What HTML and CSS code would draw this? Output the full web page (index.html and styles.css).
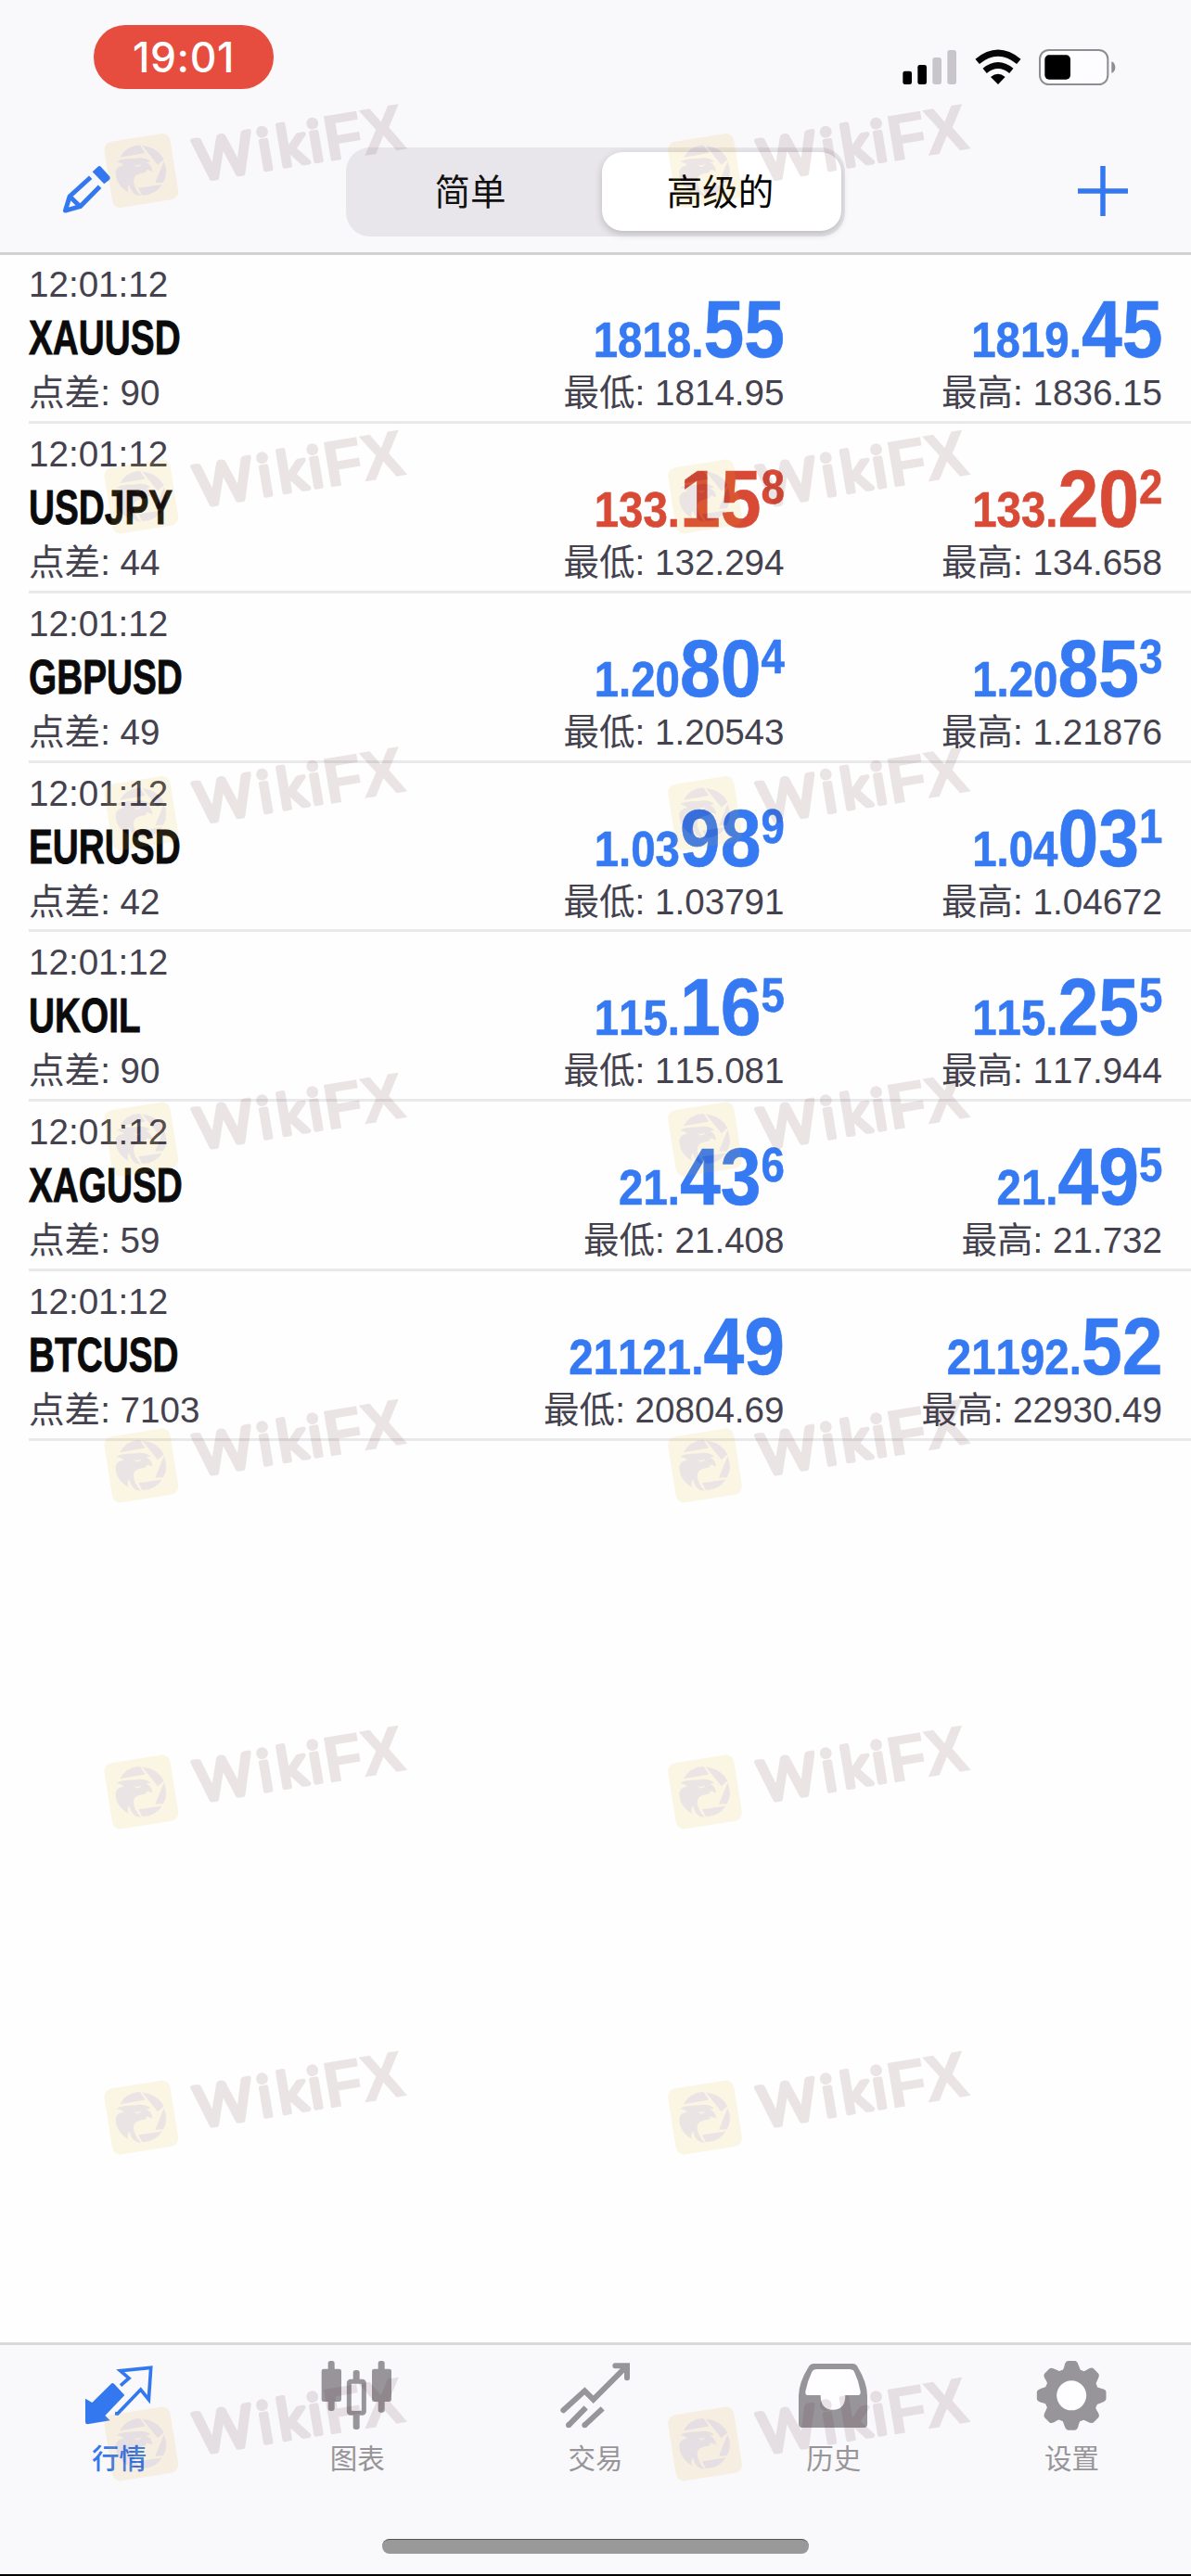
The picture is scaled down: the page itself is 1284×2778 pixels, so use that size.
FILE: index.html
```html
<!DOCTYPE html>
<html lang="zh-CN">
<head>
<meta charset="utf-8">
<title>行情</title>
<link rel="stylesheet" href="styles.css">
</head>
<body>
<div class="screen">
  <header class="header">
    <div class="status">
      <div class="clock">19:01</div>
      <svg class="status-icons" viewBox="0 0 750 180">
        <rect x="40" y="110" width="29" height="43" rx="7"/>
        <rect x="88" y="90" width="29" height="63" rx="7"/>
        <rect x="136" y="66" width="29" height="87" rx="8" fill="#c8c6ca"/>
        <rect x="184" y="42" width="29" height="111" rx="8" fill="#c8c6ca"/>
        <path d="M281 79Q348 24 415 79" fill="none" stroke="#050505" stroke-width="21"/>
        <path d="M305 109Q348 74 391 109" fill="none" stroke="#050505" stroke-width="20"/>
        <path d="M324 129Q348 110 371 129L348 153Z"/>
        <rect x="483" y="42" width="220" height="111" rx="29" fill="#fdfcfe" stroke="#8e8d91" stroke-width="6"/>
        <rect x="499" y="58" width="83" height="79" rx="14"/>
        <path d="M715 79Q727 84 727 98T715 116Z" fill="#8e8d91"/>
      </svg>
    </div>
    <div class="nav">
      <svg class="pencil" viewBox="30 112 165 163" fill="none" stroke="#3478f0" stroke-width="15" stroke-linejoin="round">
        <path d="M131 137L149 120Q154 116 159 121L187 152Q191 158 186 163L169 176Z" fill="#3478f0" stroke="none"/>
        <path d="M125 155L57 217L43 263L91 250L155 185M57 217L91 250"/>
      </svg>
      <div class="segments">
        <div class="segment">简单</div>
        <div class="segment selected">高级的</div>
      </div>
      <svg class="plus" viewBox="0 0 54 54"><path d="M27 0V54M0 27H54" stroke="#3478f0" stroke-width="5.5"/></svg>
    </div>
  </header>

  <main class="quotes">
    <div class="row">
      <div class="info"><div class="time">12:01:12</div><div class="symbol"><span>XAUUSD</span></div><div class="meta">点差: 90</div></div>
      <div class="quote"><div class="price">1818.<b>55</b></div><div class="meta">最低: 1814.95</div></div>
      <div class="quote"><div class="price">1819.<b>45</b></div><div class="meta">最高: 1836.15</div></div>
    </div>
    <div class="row">
      <div class="info"><div class="time">12:01:12</div><div class="symbol"><span>USDJPY</span></div><div class="meta">点差: 44</div></div>
      <div class="quote down"><div class="price">133.<b>15</b><i>8</i></div><div class="meta">最低: 132.294</div></div>
      <div class="quote down"><div class="price">133.<b>20</b><i>2</i></div><div class="meta">最高: 134.658</div></div>
    </div>
    <div class="row">
      <div class="info"><div class="time">12:01:12</div><div class="symbol"><span>GBPUSD</span></div><div class="meta">点差: 49</div></div>
      <div class="quote"><div class="price">1.20<b>80</b><i>4</i></div><div class="meta">最低: 1.20543</div></div>
      <div class="quote"><div class="price">1.20<b>85</b><i>3</i></div><div class="meta">最高: 1.21876</div></div>
    </div>
    <div class="row">
      <div class="info"><div class="time">12:01:12</div><div class="symbol"><span>EURUSD</span></div><div class="meta">点差: 42</div></div>
      <div class="quote"><div class="price">1.03<b>98</b><i>9</i></div><div class="meta">最低: 1.03791</div></div>
      <div class="quote"><div class="price">1.04<b>03</b><i>1</i></div><div class="meta">最高: 1.04672</div></div>
    </div>
    <div class="row">
      <div class="info"><div class="time">12:01:12</div><div class="symbol"><span>UKOIL</span></div><div class="meta">点差: 90</div></div>
      <div class="quote"><div class="price">115.<b>16</b><i>5</i></div><div class="meta">最低: 115.081</div></div>
      <div class="quote"><div class="price">115.<b>25</b><i>5</i></div><div class="meta">最高: 117.944</div></div>
    </div>
    <div class="row">
      <div class="info"><div class="time">12:01:12</div><div class="symbol"><span>XAGUSD</span></div><div class="meta">点差: 59</div></div>
      <div class="quote"><div class="price">21.<b>43</b><i>6</i></div><div class="meta">最低: 21.408</div></div>
      <div class="quote"><div class="price">21.<b>49</b><i>5</i></div><div class="meta">最高: 21.732</div></div>
    </div>
    <div class="row">
      <div class="info"><div class="time">12:01:12</div><div class="symbol"><span>BTCUSD</span></div><div class="meta">点差: 7103</div></div>
      <div class="quote"><div class="price">21121.<b>49</b></div><div class="meta">最低: 20804.69</div></div>
      <div class="quote"><div class="price">21192.<b>52</b></div><div class="meta">最高: 22930.49</div></div>
    </div>
  </main>

  <footer class="footer">
    <nav class="tabs">
      <div class="tab active">
        <svg viewBox="85 40 240 240">
          <path d="M97 171L119 184L182 122Q186 119 190 123L224 160L161 226L177 242L104 254Q97 254 97 247Z" fill="currentColor"/>
          <path d="M211 129L238 105L210 81L309 71L302 174L276 142L201 220L193 219" fill="none" stroke="currentColor" stroke-width="11"/>
        </svg>
        <span>行情</span>
      </div>
      <div class="tab">
        <svg viewBox="46 40 240 240" fill="currentColor">
          <rect x="72" y="49" width="21" height="162" rx="8"/><rect x="51" y="75" width="64" height="106" rx="7"/>
          <rect x="234" y="49" width="21" height="167" rx="8"/><rect x="214" y="75" width="63" height="106" rx="7"/>
          <rect x="153" y="79" width="21" height="40" rx="8"/><rect x="153" y="215" width="21" height="56" rx="8"/>
          <rect x="140" y="116" width="48" height="102" rx="5" fill="none" stroke="currentColor" stroke-width="15"/>
          <rect x="150" y="127" width="28" height="83" rx="8" fill="#f9f8fb"/>
        </svg>
        <span>图表</span>
      </div>
      <div class="tab">
        <svg viewBox="816 40 240 240" fill="none" stroke="currentColor" stroke-width="18">
          <path d="M832 209L901 146L929 174L1034 69" stroke-linecap="round"/>
          <path d="M1000 65H1038V104" stroke-linecap="round"/>
          <path d="M905 200L849 257M959 203L901 257"/>
          <circle cx="849" cy="257" r="9" fill="currentColor" stroke="none"/><circle cx="901" cy="257" r="9" fill="currentColor" stroke="none"/>
        </svg>
        <span>交易</span>
      </div>
      <div class="tab">
        <svg viewBox="56 40 240 240">
          <path d="M112 58H236Q248 58 252 67Q284 120 284 162V254Q284 265 273 265H73Q62 265 62 254V162Q62 120 95 67Q100 58 112 58Z" fill="currentColor"/>
          <path d="M119 76H226Q238 76 242 84Q257 115 262 148Q263 160 255 160H213Q213 207 173 207T133 160H91Q83 160 84 148Q90 115 105 84Q109 76 119 76Z" fill="#fefdff"/>
        </svg>
        <span>历史</span>
      </div>
      <div class="tab">
        <svg viewBox="827 40 240 240" fill="currentColor">
          <defs><path id="tooth" d="M908 90Q918 82 921 68Q924 49 934 49H955Q963 49 968 65Q972 80 981 90Z"/></defs>
          <circle cx="944.5" cy="161" r="88"/>
          <use href="#tooth"/><use href="#tooth" transform="rotate(45 944.5 161)"/><use href="#tooth" transform="rotate(90 944.5 161)"/><use href="#tooth" transform="rotate(135 944.5 161)"/><use href="#tooth" transform="rotate(180 944.5 161)"/><use href="#tooth" transform="rotate(225 944.5 161)"/><use href="#tooth" transform="rotate(270 944.5 161)"/><use href="#tooth" transform="rotate(315 944.5 161)"/>
          <circle cx="944.5" cy="161" r="48" fill="#fefdff"/>
        </svg>
        <span>设置</span>
      </div>
    </nav>
    <div class="home-bar"></div>
  </footer>

  <svg class="watermarks" viewBox="0 0 1284 2778">
    <defs>
      <g id="mark" fill="#58262f">
        <rect x="-36" y="-36" width="72" height="72" rx="9" fill="#dfb426" transform="rotate(-9)"/>
        <g transform="scale(.33333) translate(-187 -280)">
          <path d="M118 237Q138 200 182 197L200 223ZM190 199Q240 205 260 244L240 261ZM260 250Q277 285 258 318L232 320ZM178 336L254 325Q235 358 190 360Z"/>
          <path d="M107 252Q120 240 165 241Q200 234 217 251L203 254Q222 262 223 283L205 276Q204 288 188 288Q160 293 162 315Q165 340 186 361Q158 363 148 325Q140 335 145 350Q103 325 104 283Q108 265 130 263Q120 251 107 252Z"/>
          <path d="M162 260Q174 266 187 259Q184 268 173 268Z" fill="#dfb426"/>
        </g>
        <g transform="rotate(-9.5)">
          <text class="wiki" y="21" x="59 128 149 183">Wiki</text>
          <text class="fx" x="200" y="23" textLength="86" lengthAdjust="spacingAndGlyphs">FX</text>
        </g>
      </g>
      <g id="pair"><use href="#mark" x="152.3"/><use href="#mark" x="760"/></g>
    </defs>
    <g opacity=".12">
      <use href="#pair" y="184"/><use href="#pair" y="535.5"/><use href="#pair" y="877"/><use href="#pair" y="1228.5"/>
      <use href="#pair" y="1580.5"/><use href="#pair" y="1932.5"/><use href="#pair" y="2283.5"/><use href="#pair" y="2635.5"/>
    </g>
  </svg>
</div>
</body>
</html>
```
FILE: styles.css
```css
* { box-sizing: border-box; }

body {
  margin: 0;
  background: #fff;
  font-family: "Liberation Sans", "Noto Sans CJK SC", sans-serif;
  font-kerning: none;
}

.screen {
  position: relative;
  display: flex;
  flex-direction: column;
  width: 1284px;
  height: 2778px;
  overflow: hidden;
  background: #fefefe;
}

.header {
  height: 275px;
  background: #f9f8fb;
  border-bottom: 3px solid #d2d1d4;
}

.status {
  display: flex;
  justify-content: space-between;
  height: 159px;
  padding: 27px 74px 0 101px;
}

.clock {
  width: 194px;
  height: 69px;
  border-radius: 34px;
  background: #e74d3e;
  color: #fff;
  font: 500 44.5px/71px Inter, "Liberation Sans", sans-serif;
  letter-spacing: .6px;
  text-align: center;
}

.status-icons { width: 250px; height: 60px; margin-top: 13px; }

.nav {
  display: flex;
  align-items: flex-start;
  justify-content: space-between;
  padding: 0 68px 0 66px;
}

.pencil { width: 55px; height: 54px; margin-top: 18px; }
.plus { width: 54px; height: 54px; margin-top: 20px; }

.segments {
  display: flex;
  width: 538px;
  height: 96px;
  margin-left: 1px;
  padding: 5px 4px 6px;
  border-radius: 26px;
  background: #e8e6ea;
}

.segment {
  flex: 1;
  padding-right: 12px;
  color: #111;
  font-size: 38.5px;
  line-height: 88px;
  text-align: center;
}

.segment.selected {
  flex: 0 0 258px;
  padding-right: 3px;
  border-radius: 22px;
  background: #fff;
  color: #000;
  box-shadow: 0 3px 8px rgba(0, 0, 0, .2);
}

.quotes {
  flex: 1;
  padding: 0 0 0 31px;
  margin-top: -1px;
}

.row {
  display: grid;
  grid-template-columns: 1fr 430px 407.5px;
  height: 182.86px;
  padding-right: 31px;
  border-bottom: 3px solid #e9e9eb;
}

.time, .meta {
  color: #45424f;
  font-size: 38.6px;
}

.time { line-height: 66px; }
.meta { line-height: 70px; }

.symbol {
  height: 49px;
  color: #0b0b0c;
  font-size: 51px;
  font-weight: 700;
  line-height: 50px;
}

.symbol span {
  display: inline-block;
  transform: scaleX(.76);
  transform-origin: left;
  -webkit-text-stroke: .8px currentColor;
}

.quote { text-align: right; white-space: nowrap; }

.price {
  height: 115px;
  padding-top: 63px;
  color: #3579f3;
  font-size: 53px;
  font-weight: 700;
  line-height: 60px;
  transform: scaleX(.895);
  transform-origin: right;
  -webkit-text-stroke: .6px currentColor;
}

.price b { font-size: 88px; line-height: 0; }

.price i {
  position: relative;
  top: -25px;
  font-size: 51px;
  font-style: normal;
  line-height: 0;
}

.down .price { color: #d94a36; }

.footer {
  height: 252px;
  background: #f9f8fb;
  border-top: 3px solid #d9d8db;
  border-bottom: 2px solid #000;
}

.tabs {
  display: grid;
  grid-template-columns: repeat(5, 1fr);
  height: 209px;
  padding-top: 14px;
}

.tab {
  display: flex;
  flex-direction: column;
  align-items: center;
  color: #979599;
  font-size: 29.5px;
}

.tab svg { width: 80px; height: 80px; }
.tab span { margin-top: 7px; line-height: 44px; }
.tab.active { color: #3478f0; }
.tab.active span { font-weight: 500; }

.home-bar {
  width: 460px;
  height: 16px;
  margin: 0 auto;
  border-top: 1px solid #555;
  border-radius: 8px;
  background: #999;
}

.watermarks {
  position: absolute;
  inset: 0;
  width: 1284px;
  height: 2778px;
  pointer-events: none;
}

.wiki {
  font: 400 61px Lato, sans-serif;
  stroke: #58262f;
  stroke-width: 5px;
  stroke-linejoin: round;
}

.fx {
  font: 700 69px "Liberation Sans", sans-serif;
  stroke: #58262f;
  stroke-width: 1.5px;
}
```
